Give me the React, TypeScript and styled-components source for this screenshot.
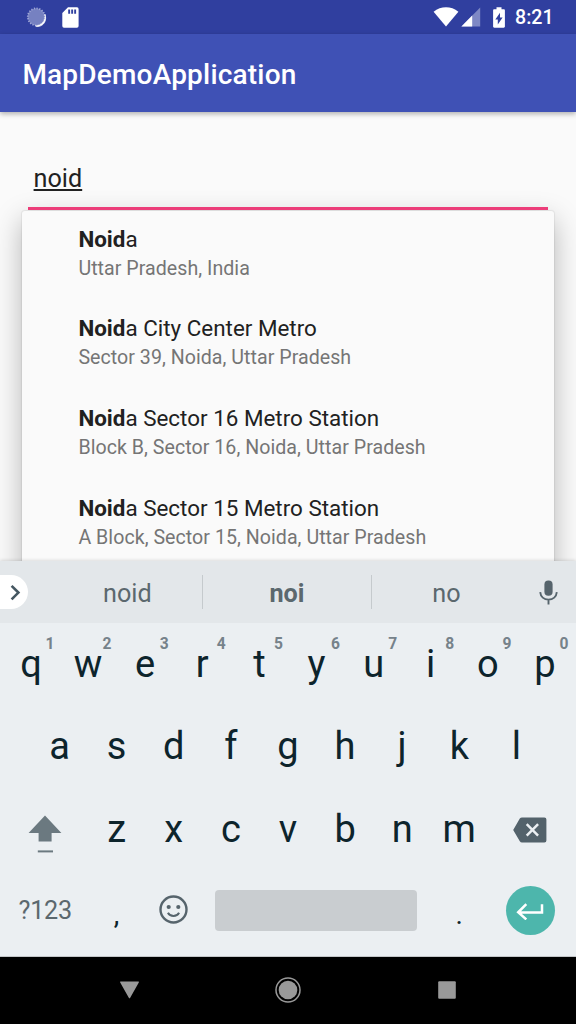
import React from "react";
import styled, { createGlobalStyle } from "styled-components";

const GlobalStyle = createGlobalStyle`
  * { box-sizing: border-box; }
  body { margin: 0; background: #fafafa; font-family: Roboto, "Liberation Sans", sans-serif; }
  svg { display: block; flex: none; }
`;

const Screen = styled.div`
  width: 576px;
  height: 1024px;
  display: flex;
  flex-direction: column;
  overflow: hidden;
  background: #fafafa;
`;

const StatusBar = styled.header`
  height: 34px;
  flex: none;
  display: flex;
  align-items: center;
  padding: 0 22.4px 0 26px;
  background: #303f9f;
  color: #fff;
  z-index: 2;
`;

const StatusGroup = styled.div<{ $end?: boolean }>`
  display: flex;
  align-items: center;
  margin-left: ${(p) => (p.$end ? "auto" : "0")};
`;

const Clock = styled.span`
  font-size: 19.6px;
  font-weight: 500;
  line-height: 32px;
  margin-left: 10px;
  padding-top: 2px;
`;

const AppBar = styled.div`
  height: 78px;
  flex: none;
  display: flex;
  align-items: center;
  padding: 3px 22.4px 0;
  background: #3f51b5;
  box-shadow: 0 2px 5px rgba(0, 0, 0, 0.3);
  z-index: 2;
`;

const Title = styled.h1`
  margin: 0;
  color: #fff;
  font-size: 28px;
  font-weight: 500;
  line-height: 36px;
  letter-spacing: 0.2px;
`;

const Content = styled.main`
  height: 449px;
  flex: none;
  overflow: hidden;
  padding: 50px 22.4px 0;
`;

const Field = styled.div`
  position: relative;
  z-index: 1;
  height: 48px;
  margin: 0 5.6px 1px;
  padding: 0 5.6px;
  border-bottom: 3px solid #ec3d79;
  color: #212121;
  font-size: 25.2px;
  line-height: 33px;
`;

const Composing = styled.span`
  text-decoration: underline;
  text-decoration-thickness: 1.6px;
  text-underline-offset: 2px;
  text-decoration-skip-ink: none;
`;

const Dropdown = styled.ul`
  list-style: none;
  margin: 0;
  padding: 0;
  height: 400px;
  border-radius: 3px;
  background: #fafafa;
  box-shadow: 0 0 1px 1px rgba(0, 0, 0, 0.06), 0 9px 28px rgba(0, 0, 0, 0.28);
`;

const Place = styled.li`
  height: 89.6px;
  padding: 13.8px 56px 0;
`;

const PlaceName = styled.div`
  color: #212121;
  font-size: 22.4px;
  line-height: 29px;
  letter-spacing: 0.01px;
`;

const PlaceArea = styled.div`
  color: #757575;
  font-size: 19.6px;
  line-height: 29px;
  letter-spacing: 0.04px;
`;

const Keyboard = styled.section`
  height: 396px;
  flex: none;
  background: #ebeff2;
  border-bottom: 1px solid #c3c6c8;
  box-shadow: 0 -1px 3px rgba(0, 0, 0, 0.12);
  z-index: 1;
`;

const SuggestionBar = styled.div`
  height: 62px;
  display: flex;
  align-items: center;
  background: #e3e7ea;
  color: #5b686e;
`;

const ExpandTab = styled.div`
  width: 28px;
  height: 34px;
  margin-right: 6px;
  padding-left: 8.5px;
  display: flex;
  align-items: center;
  border-radius: 0 17px 17px 0;
  background: #fff;
`;

const Suggestion = styled.div<{ $strong?: boolean; $wide?: boolean }>`
  width: ${(p) => (p.$wide ? 167.4 : 149)}px;
  padding-top: 3px;
  text-align: center;
  font-size: 25.2px;
  line-height: 34px;
  font-weight: ${(p) => (p.$strong ? 700 : 400)};
`;

const Divider = styled.div`
  width: 1.4px;
  height: 34px;
  background: #c5cacd;
`;

const KeyRow = styled.div<{ $inset?: number }>`
  height: 82.35px;
  display: flex;
  padding: 0 ${(p) => p.$inset ?? 2.4}px;
`;

const Key = styled.div<{ $width?: number }>`
  position: relative;
  width: ${(p) => p.$width ?? 57.12}px;
  flex: none;
  display: flex;
  align-items: center;
  justify-content: center;
  color: #0d242c;
  font-size: 38px;
`;

const Letter = styled.span`
  line-height: 44px;
  padding-bottom: 0.5px;
`;

const Hint = styled.sup`
  position: absolute;
  top: 10.5px;
  left: 37.6px;
  width: 20px;
  text-align: center;
  color: #76828a;
  font-size: 15.6px;
  font-weight: 700;
  line-height: 20px;
`;

const SymbolsLabel = styled.span`
  color: #5b686e;
  font-size: 25.2px;
  letter-spacing: -0.2px;
  padding-bottom: 1px;
`;

const Punctuation = styled.span`
  font-size: 28px;
  padding-top: 7px;
`;

const SpaceBar = styled.div`
  width: 202px;
  height: 41px;
  margin: 0 2px 2px 0;
  border-radius: 4px;
  background: #c9cdd0;
`;

const EnterButton = styled.div`
  width: 49px;
  height: 49px;
  margin: 0 1px 1px 0;
  border-radius: 50%;
  display: flex;
  align-items: center;
  justify-content: center;
  background: #4db6ac;
`;

const NavBar = styled.nav`
  height: 67px;
  flex: none;
  display: grid;
  grid-template-columns: 159px 159px 159px;
  justify-content: center;
  justify-items: center;
  align-items: center;
  padding-bottom: 1px;
  background: #000;
`;

const places = [
  { rest: "a", area: "Uttar Pradesh, India" },
  { rest: "a City Center Metro", area: "Sector 39, Noida, Uttar Pradesh" },
  { rest: "a Sector 16 Metro Station", area: "Block B, Sector 16, Noida, Uttar Pradesh" },
  { rest: "a Sector 15 Metro Station", area: "A Block, Sector 15, Noida, Uttar Pradesh" },
];

const SyncIcon = () => (
  <svg width="21" height="21" viewBox="0 0 21 21">
    <circle cx="10.3" cy="9.9" r="8.6" fill="#7681c1" />
    <circle cx="10.3" cy="9.9" r="8.5" fill="none" stroke="#a0a8d6" strokeWidth="1.8" strokeDasharray="1.2 1.47" />
    <path d="M18.9 7.2C20 13 16.5 18.6 9.6 18.9L10.8 19.6C17.5 19.8 21.4 13.5 18.9 7.2Z" fill="#fff" stroke="#fff" strokeWidth=".7" />
  </svg>
);

const SdCardIcon = () => (
  <svg width="17" height="21" viewBox="0 0 17 21">
    <path
      fillRule="evenodd"
      fill="#fff"
      d="M6 .3h9A1.7 1.7 0 0 1 16.6 2v17a1.7 1.7 0 0 1-1.7 1.7H2A1.7 1.7 0 0 1 .3 19V6ZM6.2 2.6v4.1h1.9V2.6Zm3 0v4.1h1.9V2.6Zm3 0v4.1h1.9V2.6Z"
    />
  </svg>
);

const WifiIcon = () => (
  <svg width="26" height="20" viewBox="0 0 26 20">
    <path d="M.6 4.7C8-1.2 18-1.2 25.4 4.7L13 19.6Z" fill="#fff" />
  </svg>
);

const SignalIcon = () => (
  <svg width="20" height="20" viewBox="0 0 20 20">
    <path d="M19.2.5V19.4H.4Z" fill="#7e88c5" />
    <path d="M11.2 8.5V19.4H.4Z" fill="#fff" />
  </svg>
);

const BatteryIcon = () => (
  <svg width="12" height="21" viewBox="0 0 12 21">
    <path
      fillRule="evenodd"
      fill="#fff"
      d="M3.5.3h5v2h2.2c.7 0 1.2.5 1.2 1.2v16c0 .7-.5 1.2-1.2 1.2H1.3c-.7 0-1.2-.5-1.2-1.2v-16c0-.7.5-1.2 1.2-1.2h2.2ZM7 5.8 2.3 12.4h2.5v5L9.6 10.6H7Z"
    />
  </svg>
);

const ChevronIcon = () => (
  <svg width="12" height="17" viewBox="0 0 12 17">
    <path d="M2.6 1.8 9.4 8.6 2.6 15.4" fill="none" stroke="#455761" strokeWidth="2.6" />
  </svg>
);

const MicIcon = () => (
  <svg width="19" height="25" viewBox="0 0 19 25">
    <rect x="5.4" y=".4" width="8.2" height="15.4" rx="4" fill="#56646c" />
    <path d="M1.2 12.2C1.6 16.6 5 19.6 9.5 19.6S17.4 16.6 17.8 12.2M9.5 19.6V24.6" fill="none" stroke="#56646c" strokeWidth="1.9" />
  </svg>
);

const ShiftSlot = styled.div`
  padding-top: 12px;
`;

const ShiftIcon = () => (
  <svg width="34" height="39" viewBox="0 0 34 39">
    <path d="M17 .6 33.4 18H23.6V26.4H10.6V18H.6Z" fill="#6b7980" />
    <path d="M9.8 36.4H25" stroke="#6b7980" strokeWidth="2" />
  </svg>
);

const BackspaceSlot = styled.div`
  padding: 3px 1px 0 0;
`;

const BackspaceIcon = () => (
  <svg width="34" height="26" viewBox="0 0 34 26">
    <path d="M9 .4H31.4A2 2 0 0 1 33.4 2.4V23.4A2 2 0 0 1 31.4 25.4H9Q7.6 25.4 6.8 24.2L.2 12.9 6.8 1.6Q7.6.4 9 .4Z" fill="#53626b" />
    <path d="M13.7 7.2 25.1 18.6M25.1 7.2 13.7 18.6" stroke="#ebeff2" strokeWidth="2.5" />
  </svg>
);

const EmojiSlot = styled.div`
  padding-bottom: 3px;
`;

const EmojiIcon = () => (
  <svg width="29" height="29" viewBox="0 0 29 29">
    <circle cx="14.5" cy="14.5" r="13" fill="none" stroke="#56646c" strokeWidth="2.4" />
    <circle cx="9.7" cy="12" r="2.1" fill="#56646c" />
    <circle cx="19.3" cy="12" r="2.1" fill="#56646c" />
    <path d="M8.9 17.8C11.3 22.2 17.7 22.2 20.1 17.8" fill="none" stroke="#56646c" strokeWidth="2" />
  </svg>
);

const EnterIcon = () => (
  <svg width="28" height="18" viewBox="0 0 28 18">
    <path d="M26 1.4V9.6H2.5M10.3 1.4 2.2 9.5 10.3 16.6" transform="translate(0 .8)" fill="none" stroke="#fff" strokeWidth="2.5" />
  </svg>
);

const NavBackIcon = () => (
  <svg width="21" height="18" viewBox="0 0 21 18">
    <path d="M1.6.6H19.4Q20.3.8 19.8 1.6L11.2 16.8Q10.5 17.8 9.8 16.8L1.2 1.6Q.7.8 1.6.6Z" fill="#999" />
  </svg>
);

const NavHomeIcon = () => (
  <svg width="26" height="26" viewBox="0 0 26 26">
    <circle cx="13" cy="13" r="12" fill="none" stroke="#999" strokeWidth="1.5" />
    <circle cx="13" cy="13" r="9.3" fill="#999" />
  </svg>
);

const NavRecentsIcon = () => (
  <svg width="18" height="18" viewBox="0 0 18 18">
    <rect x=".2" y=".2" width="17.6" height="17.6" rx="1" fill="#999" />
  </svg>
);

const Gap = styled.span<{ $size: number }>`
  width: ${(p) => p.$size}px;
  flex: none;
`;

export default function App() {
  return (
    <>
      <GlobalStyle />
      <Screen>
        <StatusBar>
          <StatusGroup>
            <SyncIcon />
            <Gap $size={14.5} />
            <SdCardIcon />
          </StatusGroup>
          <StatusGroup $end>
            <WifiIcon />
            <Gap $size={2} />
            <SignalIcon />
            <Gap $size={12} />
            <BatteryIcon />
            <Clock>8:21</Clock>
          </StatusGroup>
        </StatusBar>
        <AppBar>
          <Title>MapDemoApplication</Title>
        </AppBar>
        <Content>
          <Field>
            <Composing>noid</Composing>
          </Field>
          <Dropdown>
            {places.map((p) => (
              <Place key={p.area}>
                <PlaceName>
                  <b>Noid</b>
                  {p.rest}
                </PlaceName>
                <PlaceArea>{p.area}</PlaceArea>
              </Place>
            ))}
          </Dropdown>
        </Content>
        <Keyboard>
          <SuggestionBar>
            <ExpandTab>
              <ChevronIcon />
            </ExpandTab>
            <Gap $size={18.8} />
            <Suggestion>noid</Suggestion>
            <Divider />
            <Suggestion $wide $strong>noi</Suggestion>
            <Divider />
            <Suggestion>no</Suggestion>
            <Gap $size={17.6} />
            <MicIcon />
          </SuggestionBar>
          <KeyRow>
            {[..."qwertyuiop"].map((c, i) => (
              <Key key={c}>
                <Letter>{c}</Letter>
                <Hint>{(i + 1) % 10}</Hint>
              </Key>
            ))}
          </KeyRow>
          <KeyRow $inset={30.96}>
            {[..."asdfghjkl"].map((c) => (
              <Key key={c}>
                <Letter>{c}</Letter>
              </Key>
            ))}
          </KeyRow>
          <KeyRow>
            <Key $width={85.68}>
              <ShiftSlot>
                <ShiftIcon />
              </ShiftSlot>
            </Key>
            {[..."zxcvbnm"].map((c) => (
              <Key key={c}>
                <Letter>{c}</Letter>
              </Key>
            ))}
            <Key $width={85.68}>
              <BackspaceSlot>
                <BackspaceIcon />
              </BackspaceSlot>
            </Key>
          </KeyRow>
          <KeyRow>
            <Key $width={85.68}>
              <SymbolsLabel>?123</SymbolsLabel>
            </Key>
            <Key>
              <Punctuation>,</Punctuation>
            </Key>
            <Key>
              <EmojiSlot>
                <EmojiIcon />
              </EmojiSlot>
            </Key>
            <Key $width={228.48}>
              <SpaceBar />
            </Key>
            <Key>
              <Punctuation>.</Punctuation>
            </Key>
            <Key $width={85.68}>
              <EnterButton>
                <EnterIcon />
              </EnterButton>
            </Key>
          </KeyRow>
        </Keyboard>
        <NavBar>
          <NavBackIcon />
          <NavHomeIcon />
          <NavRecentsIcon />
        </NavBar>
      </Screen>
    </>
  );
}
